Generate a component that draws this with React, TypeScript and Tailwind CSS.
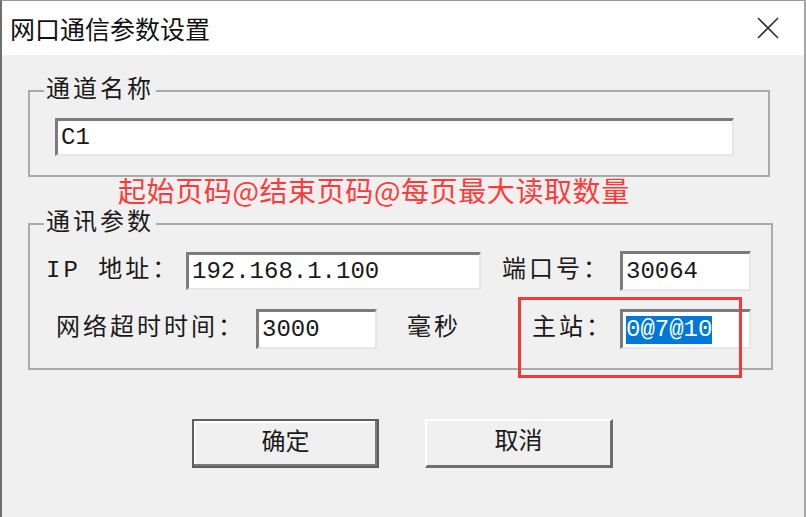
import React from "react";

const mono = { fontFamily: '"Liberation Mono", "Noto Sans CJK SC", monospace' };

const Field = ({ w, h, children }: { w: string; h: string; children: React.ReactNode }) => (
  <div
    className={`${w} ${h} flex items-center bg-white border-t-[3px] border-l-[3px] border-r-2 border-b-2 border-t-[#7c7c7c] border-l-[#7c7c7c] border-r-[#e6e6e6] border-b-[#e6e6e6] pl-[3px] text-[24px] text-[#1a1a1a]`}
    style={mono}
  >
    {children}
  </div>
);

const Label = ({ w, children }: { w: string; children: React.ReactNode }) => (
  <div className={`${w} text-[24px] tracking-[3px] text-[#1a1a1a] leading-none`} style={mono}>
    {children}
  </div>
);

export default function App() {
  return (
    <div className="relative w-[806px] h-[517px] bg-[#f0f0f0] border-l-2 border-t border-r-2 border-l-[#6e6e6e] border-t-[#9a9a9a] border-r-[#a6a6a6] overflow-hidden">
      {/* title bar */}
      <div className="h-[54px] bg-white flex items-center justify-between pl-[8px] pr-[24px]">
        <span className="text-[25px] text-[#111] leading-none" style={{ fontFamily: '"Noto Sans CJK SC", sans-serif' }}>
          网口通信参数设置
        </span>
        <svg width="24" height="24" viewBox="0 0 24 24">
          <path d="M2 2 L22 22 M22 2 L2 22" stroke="#333" strokeWidth="1.6" fill="none" />
        </svg>
      </div>

      <div className="pl-[26px]">
        <fieldset className="mt-[21px] w-[742px] border-2 border-[#ababab] pb-[19px]">
          <legend className="ml-[14px] px-[2px] text-[24px] tracking-[3px] text-[#1a1a1a] leading-[30px]" style={mono}>
            通道名称
          </legend>
          <div className="mt-[12px] pl-[25px]">
            <Field w="w-[679px]" h="h-[38px]">C1</Field>
          </div>
        </fieldset>

        <div
          className="ml-[90px] h-[30px] text-[28px] tracking-[0.6px] leading-[30px] text-[#ff3a3a] -mt-[2px]"
          style={{ fontFamily: '"Noto Sans CJK SC", sans-serif' }}
        >
          起始页码@结束页码@每页最大读取数量
        </div>

        <fieldset className="mt-[4px] w-[745px] border-2 border-[#ababab] pb-[19px]">
          <legend className="ml-[14px] px-[2px] text-[24px] tracking-[3px] text-[#1a1a1a] leading-[30px]" style={mono}>
            通讯参数
          </legend>
          <div className="flex items-center mt-[12px] pl-[16px]">
            <Label w="w-[140px]">IP 地址：</Label>
            <Field w="w-[295px]" h="h-[38px]">192.168.1.100</Field>
            <div className="ml-[21px]">
              <Label w="w-[118px]">端口号：</Label>
            </div>
            <Field w="w-[131px]" h="h-[40px]">30064</Field>
          </div>
          <div className="flex items-center mt-[18px] pl-[26px]">
            <Label w="w-[200px]">网络超时时间：</Label>
            <Field w="w-[121px]" h="h-[40px]">3000</Field>
            <div className="ml-[30px]">
              <Label w="w-[125px]">毫秒</Label>
            </div>
            <Label w="w-[88px]">主站：</Label>
            <Field w="w-[131px]" h="h-[40px]">
              <span className="bg-[#0078d7] text-white leading-[28px]">0@7@10</span>
            </Field>
          </div>
        </fieldset>

        <div className="flex gap-[46px] ml-[164px] mt-[49px]">
          <button
            className="w-[187px] h-[49px] bg-[#f0f0f0] border-2 border-[#5e5e5e] shadow-[inset_-2px_-2px_0_#7a7a7a,inset_2px_2px_0_#ffffff] text-[24px] text-[#1a1a1a]"
            style={mono}
          >
            确定
          </button>
          <button
            className="w-[188px] h-[49px] bg-[#f0f0f0] border-t-2 border-l-2 border-r-[3px] border-b-[3px] border-t-white border-l-white border-r-[#6e6e6e] border-b-[#6e6e6e] text-[24px] text-[#1a1a1a]"
            style={mono}
          >
            取消
          </button>
        </div>
      </div>

      {/* annotation */}
      <div className="absolute left-[516px] top-[296px] w-[224px] h-[81px] border-[3px] border-[#f23a3a]" />
    </div>
  );
}
